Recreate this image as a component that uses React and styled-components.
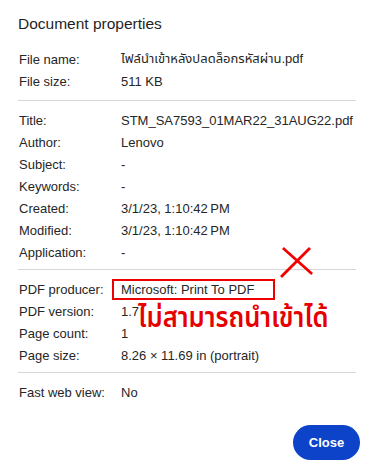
import React from 'react'
import styled, { createGlobalStyle } from 'styled-components'

// 문서 속성 데이터
const SECTIONS = [
  [
    { label: 'File name:', value: 'ไฟล์นำเข้าหลังปลดล็อกรหัสผ่าน.pdf' },
    { label: 'File size:', value: '511 KB' },
  ],
  [
    { label: 'Title:', value: 'STM_SA7593_01MAR22_31AUG22.pdf' },
    { label: 'Author:', value: 'Lenovo' },
    { label: 'Subject:', value: '-' },
    { label: 'Keywords:', value: '-' },
    { label: 'Created:', value: '3/1/23, 1:10:42\u2009PM' },
    { label: 'Modified:', value: '3/1/23, 1:10:42\u2009PM' },
    { label: 'Application:', value: '-' },
  ],
  [
    { label: 'PDF producer:', value: 'Microsoft: Print To PDF', boxed: true },
    { label: 'PDF version:', value: '1.7' },
    { label: 'Page count:', value: '1' },
    { label: 'Page size:', value: '8.26 × 11.69 in (portrait)' },
  ],
  [
    { label: 'Fast web view:', value: 'No' },
  ],
];

const FONT = `-apple-system, "Liberation Sans", Arial, "Noto Sans Thai", sans-serif`;

const GlobalStyle = createGlobalStyle`
  html, body {
    margin: 0;
    padding: 0;
    background: #fff;
  }
  body {
    font-family: ${FONT};
    color: #222;
  }
`;

const App = () => {
  return (
    <>
      <GlobalStyle />
      <Dialog>
        <Heading>Document properties</Heading>

        {SECTIONS.map((rows, i) => (
          <Section key={i} $last={i === SECTIONS.length - 1} $first={i === 0}>
            {rows.map((row) => (
              <Row key={row.label}>
                <Label>{row.label}</Label>
                <Value $boxed={row.boxed}>{row.value}</Value>
              </Row>
            ))}
          </Section>
        ))}

        <Footer>
          <CloseBtn type="button">Close</CloseBtn>
        </Footer>

        {/* 빨간 표시 */}
        <Cross width="34" height="32" viewBox="0 0 34 32">
          <path d="M4 3 L31 27 M2 30 L29 3" stroke="#f40000" strokeWidth="2.8" strokeLinecap="square" fill="none" />
        </Cross>
        <Warning>ไม่สามารถนำเข้าได้</Warning>
      </Dialog>
    </>
  )
}

const Dialog = styled.div`
  position: relative;
  width: 372px;
  height: 467px;
  box-sizing: border-box;
  padding: 14px 16px 0 18px;
  background: #fff;
`;

const Heading = styled.h1`
  margin: 0;
  height: 20px;
  line-height: 20px;
  font-size: 15.5px;
  font-weight: 400;
  color: #1f1f1f;
`;

const Section = styled.div`
  padding: ${(p) => (p.$first ? '14px 0 8px' : '8px 0 6px')};
  border-bottom: ${(p) => (p.$last ? 'none' : '1px solid #d6d6d6')};
`;

const Row = styled.div`
  display: grid;
  grid-template-columns: 102px 1fr;
  height: 22px;
  align-items: center;
  font-size: 13px;
  padding-left: 1px;
`;

const Label = styled.span`
  color: #262626;
  white-space: nowrap;
`;

const Value = styled.span`
  color: #262626;
  white-space: nowrap;
  ${(p) => p.$boxed && `
    margin-left: -9px;
    width: 163px;
    height: 21px;
    box-sizing: border-box;
    border: 2px solid #ee0000;
    padding-left: 7px;
    line-height: 17px;
  `}
`;

const Footer = styled.div`
  display: flex;
  justify-content: flex-end;
  margin-top: 16px;
  margin-right: -4px;
`;

const CloseBtn = styled.button`
  width: 67px;
  height: 35px;
  border: none;
  border-radius: 18px;
  background: #0c43c8;
  color: #fff;
  font-family: ${FONT};
  font-size: 13px;
  font-weight: 700;
  cursor: pointer;
`;

// 주석 오버레이
const Cross = styled.svg`
  position: absolute;
  left: 280px;
  top: 246px;
`;

const Warning = styled.div`
  position: absolute;
  left: 138px;
  top: 301px;
  font-size: 29px;
  line-height: 34px;
  font-weight: 600;
  color: #e60000;
  white-space: nowrap;
  transform: scaleX(0.88);
  transform-origin: left center;
  font-family: "Noto Sans Thai", "Noto Sans", sans-serif;
`;

export default App
